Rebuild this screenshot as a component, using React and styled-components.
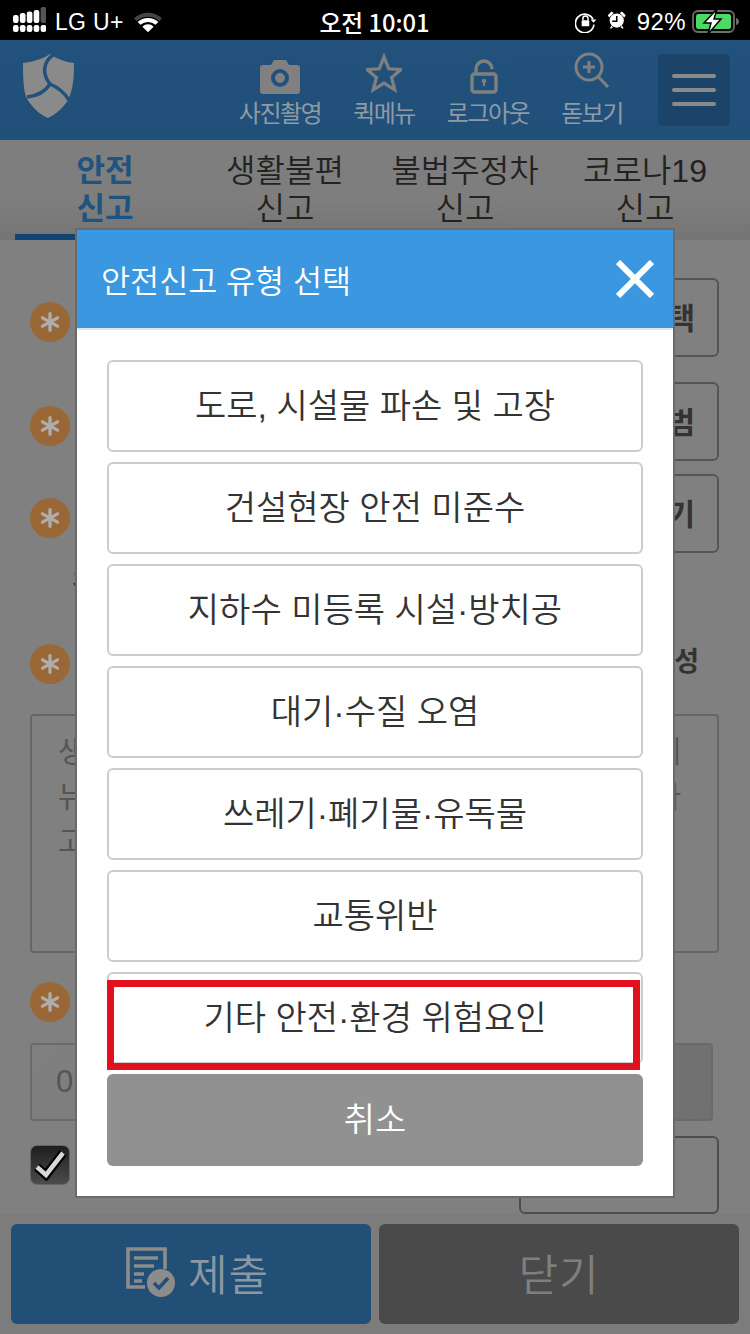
import React from "react";
import styled, { createGlobalStyle } from "styled-components";

const KR = `"Liberation Sans", "Noto Sans CJK KR", sans-serif`;

const GlobalStyle = createGlobalStyle`
  html, body { margin: 0; padding: 0; background: #808080; }
  * { box-sizing: border-box; }
  body { font-family: ${KR}; }
`;

const Page = styled.div`
  position: relative;
  width: 750px;
  height: 1334px;
  overflow: hidden;
  background: #808080;
`;

const StatusBar = styled.div`
  position: relative;
  z-index: 5;
  height: 40px;
  background: #000;
  color: #fff;
  display: grid;
  grid-template-columns: 1fr auto 1fr;
  align-items: center;
  padding: 4px 10px 0 13px;
  font-size: 23px;
`;
const StatusSide = styled.div`
  display: flex;
  align-items: center;
  justify-content: ${(p) => (p.$right ? "flex-end" : "flex-start")};
  gap: ${(p) => p.$gap || 8}px;
`;
const Carrier = styled.span`
  letter-spacing: 0.3px;
`;
const Clock = styled.span`
  margin-right: 4px;
  font-family: "Noto Sans CJK KR", sans-serif;
  font-size: 23.7px;
  font-weight: 500;
`;
const Percent = styled.span`
  font-size: 24px;
  letter-spacing: 0.4px;
`;

const Header = styled.header`
  height: 100px;
  background: linear-gradient(#22527b, #20507a);
  display: flex;
  align-items: center;
  padding: 0 20px 0 23px;
`;
const Logo = styled.svg`
  width: 51px;
  height: 65px;
  margin-top: -8px;
  flex: none;
`;
const NavList = styled.nav`
  margin-left: auto;
  display: flex;
`;
const NavItem = styled.div`
  width: 104px;
  display: flex;
  flex-direction: column;
  align-items: center;
  color: #8f9aa4;
  font-family: "Noto Sans CJK KR", sans-serif;
  font-size: 24px;
  letter-spacing: -1.5px;
  line-height: 32px;
  svg { display: block; height: 44px; }
`;
const MenuButton = styled.div`
  width: 72px;
  height: 72px;
  margin-left: 14px;
  border-radius: 4px;
  background: #1c4469;
  display: flex;
  flex-direction: column;
  justify-content: center;
  gap: 10px;
  padding: 0 14px;
`;
const MenuLine = styled.span`
  height: 4px;
  border-radius: 2px;
  background: #8a8a8a;
`;

const Tabs = styled.div`
  height: 100px;
  padding: 0 15px;
  background: linear-gradient(#7e7e7e 60%, #747474);
  display: grid;
  grid-template-columns: repeat(4, 180px);
`;
const Tab = styled.div`
  text-align: center;
  padding-top: 12px;
  font-size: ${(p) => (p.$active ? 31 : 32)}px;
  line-height: 38px;
  font-weight: ${(p) => (p.$active ? 700 : 350)};
  color: ${(p) => (p.$active ? "#1f5380" : "#222")};
  border-bottom: 6px solid ${(p) => (p.$active ? "#124471" : "transparent")};
`;

const Form = styled.main`
  height: 974px;
  padding: 38px 31px 0 30px;
  background: #808080;
`;
const Row = styled.div`
  display: flex;
  justify-content: space-between;
  align-items: flex-start;
  margin-bottom: ${(p) => p.$gap || 0}px;
`;
const Required = styled.span`
  width: 40px;
  height: 40px;
  margin-top: ${(p) => p.$top ?? 24}px;
  border-radius: 50%;
  background: #9a6737;
  display: flex;
  align-items: center;
  justify-content: center;
  flex: none;
`;
const PickButton = styled.div`
  width: 200px;
  height: 79px;
  padding: 0 22px 3px 0;
  border: 2px solid #555;
  border-radius: 6px;
  display: flex;
  align-items: center;
  justify-content: flex-end;
  color: #333;
  font-size: 30px;
  font-weight: 700;
  white-space: nowrap;
`;
const Note = styled.div`
  height: 91px;
  padding: 10px 0 0 42px;
  color: #333;
  font-size: 27px;
  font-weight: 700;
  white-space: nowrap;
`;
const SideLabel = styled.div`
  margin-top: ${(p) => p.$top || 0}px;
  margin-right: 20px;
  color: #333;
  font-size: 27px;
  font-weight: 700;
  white-space: nowrap;
`;
const TextBox = styled.div`
  height: 239px;
  margin-top: 30px;
  padding: 13px 36px 0 26px;
  border: 2px solid #666;
  border-radius: 4px;
  color: #555;
  font-size: 30px;
  line-height: 45px;
`;
const TextLine = styled.div`
  text-align: justify;
  text-align-last: ${(p) => (p.$short ? "left" : "justify")};
`;
const TelInput = styled.div`
  width: 683px;
  height: 78px;
  margin-top: 21px;
  padding-left: 24px;
  border: 2px solid #6a6a6a;
  border-radius: 4px;
  background: linear-gradient(135deg, #808080, #707070);
  color: #555;
  font-size: 31px;
  line-height: 74px;
`;
const AgreeRow = styled.div`
  display: flex;
  justify-content: space-between;
  align-items: flex-start;
  margin-top: 15px;
`;
const CheckBox = styled.span`
  width: 40px;
  height: 40px;
  margin-top: 9px;
  border: 1px solid #666;
  border-radius: 7px;
  background: linear-gradient(#1e1e1e, #4c4c4c);
  display: flex;
  align-items: center;
  justify-content: center;
`;
const SideBox = styled.div`
  width: 200px;
  height: 78px;
  border: 2px solid #4d4d4d;
  border-radius: 6px;
`;

const Footer = styled.footer`
  position: absolute;
  left: 0;
  right: 0;
  bottom: 0;
  z-index: 1;
  height: 120px;
  padding: 10px 11px;
  background: #7c7c7c;
  display: grid;
  grid-template-columns: 360px 360px;
  gap: 8px;
`;
const FootButton = styled.div`
  border-radius: 6px;
  background: ${(p) => (p.$primary ? "#214f75" : "#4a4a4a")};
  color: ${(p) => (p.$primary ? "#8c97a1" : "#7f7f7f")};
  display: flex;
  align-items: center;
  justify-content: center;
  gap: 12px;
  padding: 0 0 5px ${(p) => (p.$primary ? 13 : 0)}px;
  font-size: 43px;
  font-weight: 350;
  letter-spacing: 1px;
`;

const Modal = styled.section`
  position: absolute;
  z-index: 3;
  left: 75px;
  top: 228px;
  width: 600px;
  height: 970px;
  border: 2px solid #6a6a6a;
  background: #fff;
`;
const ModalHead = styled.div`
  height: 100px;
  background: #3a97e0;
  border-bottom: 2px solid #dfe6ec;
  padding-left: 24px;
  display: flex;
  align-items: center;
  justify-content: space-between;
  color: #fff;
  font-size: 31.6px;
  font-weight: 350;
`;
const CloseIcon = styled.svg`
  width: 38px;
  height: 38px;
  margin-right: 19px;
`;
const ModalBody = styled.div`
  padding: 30px 30px 0;
  display: flex;
  flex-direction: column;
  gap: 10px;
`;
const TypeButton = styled.div`
  height: 92px;
  padding-bottom: 5px;
  border: 2px solid #ccc;
  border-radius: 6px;
  display: flex;
  align-items: center;
  justify-content: center;
  background: #fff;
  color: #333;
  font-size: 34px;
  font-weight: 350;
`;
const CancelButton = styled(TypeButton)`
  border: 0;
  background: #919191;
  color: #fff;
`;
const Highlight = styled.div`
  position: absolute;
  z-index: 4;
  left: 107px;
  top: 980px;
  width: 533px;
  height: 90px;
  border: 7px solid #e3101e;
  pointer-events: none;
`;

const Cam = () => (
  <svg width="42" viewBox="0 -3 42 44">
    <path fill="#808080" fillRule="evenodd" d="M4 10h8l3-5h12l3 5h8a3 3 0 0 1 3 3v23a3 3 0 0 1-3 3H4a3 3 0 0 1-3-3V13a3 3 0 0 1 3-3zM21 14a9 9 0 1 0 0 18 9 9 0 0 0 0-18zM21 18a5 5 0 1 1 0 10 5 5 0 0 1 0-10z" />
  </svg>
);
const Star = () => (
  <svg width="36" viewBox="0 0 38 44">
    <path fill="none" stroke="#808080" strokeWidth="3.4" strokeLinejoin="miter" d="M19 4l5 12.5 13 .8-10 8.4 3.3 13L19 31.6 7.7 38.7 11 25.7 1 17.3l13-.8z" />
  </svg>
);
const Lock = () => (
  <svg width="36" viewBox="0 0 36 44">
    <path fill="none" stroke="#808080" strokeWidth="3.4" d="M6 22v-5a8 8 0 0 1 16 0" />
    <rect x="2" y="22" width="24" height="18" rx="2.5" fill="none" stroke="#808080" strokeWidth="3.4" />
    <circle cx="14" cy="29" r="2.2" fill="#808080" />
    <rect x="13" y="29" width="2" height="5" fill="#808080" />
  </svg>
);
const Zoom = () => (
  <svg width="36" viewBox="0 0 36 44">
    <circle cx="15" cy="15" r="13" fill="none" stroke="#808080" strokeWidth="3" />
    <path fill="none" stroke="#808080" strokeWidth="3" d="M24.5 25L34 35M15 9v12M9 15h12" />
  </svg>
);
const Asterisk = () => (
  <svg width="20" height="20" viewBox="0 0 24 24">
    <path fill="none" stroke="#adadad" strokeWidth="4" strokeLinecap="round" d="M12 2v20M3 7l18 10M21 7L3 17" />
  </svg>
);
const ReportIcon = () => (
  <svg width="50" height="50" viewBox="0 0 50 50">
    <path fill="none" stroke="#8c8c8c" strokeWidth="3.6" d="M19 40H2V2h37v20" />
    <path fill="none" stroke="#8c8c8c" strokeWidth="3.4" d="M8 11h24M8 19h20M8 27h10M8 34h8" />
    <circle cx="35" cy="36" r="14" fill="#8c8c8c" />
    <path fill="none" stroke="#21507a" strokeWidth="3.6" d="M28 36l5 5 9-10" />
  </svg>
);

const SIGNAL_TOPS = [8, 6, 4.5, 3, 0];
const SignalDots = () => (
  <svg width="33" height="26" viewBox="0 0 33 26" style={{ marginTop: -4 }}>
    {SIGNAL_TOPS.map((top, i) => (
      <g key={i}>
        <rect x={i * 6.9} y="18" width="5.6" height="7" rx="2.2" fill="#fff" />
        <rect x={i * 6.9} y={top} width="5.6" height={16 - top} rx="2.2" fill={i === 4 ? "#555" : "#fff"} />
      </g>
    ))}
  </svg>
);
const Wifi = () => (
  <svg width="30" height="24" viewBox="0 0 32 24">
    <path fill="#444" d="M1 8a22 22 0 0 1 30 0l-3 3a18 18 0 0 0-24 0z" />
    <path fill="#fff" d="M5 12a16 16 0 0 1 22 0l-3 3a12 12 0 0 0-16 0z" />
    <path fill="#fff" d="M10 17a8.500 8.500 0 0 1 12 0l-6 6z" />
  </svg>
);
const RotationLock = () => (
  <svg width="26" height="22" viewBox="0 0 30 26">
    <path fill="none" stroke="#fff" strokeWidth="2" d="M21 10A11 11 0 1 0 22 16" />
    <path fill="#fff" d="M18 10h7l-3.500 4z" />
    <rect x="7.500" y="11" width="9" height="7" rx="1" fill="#fff" />
    <path fill="none" stroke="#fff" strokeWidth="1.800" d="M9 11V9a3 3 0 0 1 6 0v2" />
  </svg>
);
const Alarm = () => (
  <svg width="24" height="24" viewBox="0 0 32 32">
    <circle cx="13" cy="14" r="9.500" fill="#fff" />
    <path fill="#fff" d="M1 7l5-5 3 2-6 6zM25 7l-5-5-3 2 6 6zM6 21l-2 3 1 1 3-2zM20 21l2 3-1 1-3-2z" />
    <path fill="none" stroke="#000" strokeWidth="2" d="M13 8v7H7" />
  </svg>
);
const Battery = () => (
  <svg width="48" height="26" viewBox="0 0 48 26">
    <rect x="1" y="2" width="41" height="21" rx="5" fill="none" stroke="#6d6d6d" strokeWidth="1.800" />
    <rect x="4" y="5" width="35" height="15" rx="2.500" fill="#4cd964" />
    <path fill="#6d6d6d" d="M44 9c2 .5 3 2 3 3.500s-1 3-3 3.500z" />
    <path fill="#fff" stroke="#000" strokeWidth="1.500" d="M25 0L12 14h7l-3 11 13-15h-7z" />
  </svg>
);

const TYPES = [
  "도로, 시설물 파손 및 고장",
  "건설현장 안전 미준수",
  "지하수 미등록 시설·방치공",
  "대기·수질 오염",
  "쓰레기·폐기물·유독물",
  "교통위반",
  "기타 안전·환경 위험요인",
];

export default function App() {
  return (
    <Page>
      <GlobalStyle />
      <StatusBar>
        <StatusSide $gap={9}>
          <SignalDots />
          <Carrier>LG U+</Carrier>
          <Wifi />
        </StatusSide>
        <Clock>오전 10:01</Clock>
        <StatusSide $right $gap={6}>
          <RotationLock />
          <Alarm />
          <Percent>92%</Percent>
          <Battery />
        </StatusSide>
      </StatusBar>

      <Header>
        <Logo viewBox="0 0 51 65">
          <path fill="#8a8a8a" d="M27 0C20 5 9 8 0 9c0 21 1 33 6 39 6 8 12 13 19 16 8-4 15-10 20-18 5-10 6-21 6-37-9-1-17-4-24-9z" />
          <path fill="none" stroke="#22527b" strokeWidth="3.500" d="M30 1C20 8 19 20 27 30M27 30C22 38 14 42 4 43M27 30C34 33 41 38 46 46" />
        </Logo>
        <NavList>
          <NavItem><Cam />사진촬영</NavItem>
          <NavItem><Star />퀵메뉴</NavItem>
          <NavItem><Lock />로그아웃</NavItem>
          <NavItem><Zoom />돋보기</NavItem>
        </NavList>
        <MenuButton>
          <MenuLine />
          <MenuLine />
          <MenuLine />
        </MenuButton>
      </Header>

      <Tabs>
        <Tab $active>안전<br />신고</Tab>
        <Tab>생활불편<br />신고</Tab>
        <Tab>불법주정차<br />신고</Tab>
        <Tab>코로나19<br />신고</Tab>
      </Tabs>

      <Form>
        <Row $gap={25}>
          <Required><Asterisk /></Required>
          <PickButton>유형선택</PickButton>
        </Row>
        <Row $gap={13}>
          <Required><Asterisk /></Required>
          <PickButton>신고범</PickButton>
        </Row>
        <Row>
          <Required><Asterisk /></Required>
          <PickButton>사진찍기</PickButton>
        </Row>
        <Note>경고 안내 문구</Note>
        <Row>
          <Required $top={0}><Asterisk /></Required>
          <SideLabel $top={-4}>내용 작성</SideLabel>
        </Row>
        <TextBox>
          <TextLine>생활 속 위험 요소를 자세히 적어 주세</TextLine>
          <TextLine>뉴스 기사 내용 등 참고 자료를 적습니다</TextLine>
          <TextLine $short>고</TextLine>
        </TextBox>
        <Row>
          <Required $top={29}><Asterisk /></Required>
        </Row>
        <TelInput>010</TelInput>
        <AgreeRow>
          <CheckBox>
            <svg width="34" height="32" viewBox="0 0 34 32">
              <path fill="none" stroke="#000" strokeWidth="9" d="M4 18l9 8L30 4" />
              <path fill="none" stroke="#d8d8d8" strokeWidth="4.500" d="M4 18l9 8L30 4" />
            </svg>
          </CheckBox>
          <SideBox />
        </AgreeRow>
      </Form>

      <Footer>
        <FootButton $primary><ReportIcon />제출</FootButton>
        <FootButton>닫기</FootButton>
      </Footer>

      <Modal>
        <ModalHead>
          안전신고 유형 선택
          <CloseIcon viewBox="0 0 38 38">
            <path fill="none" stroke="#fff" strokeWidth="6" d="M2 2l34 34M36 2L2 36" />
          </CloseIcon>
        </ModalHead>
        <ModalBody>
          {TYPES.map((t) => (
            <TypeButton key={t}>{t}</TypeButton>
          ))}
          <CancelButton>취소</CancelButton>
        </ModalBody>
      </Modal>
      <Highlight />
    </Page>
  );
}
